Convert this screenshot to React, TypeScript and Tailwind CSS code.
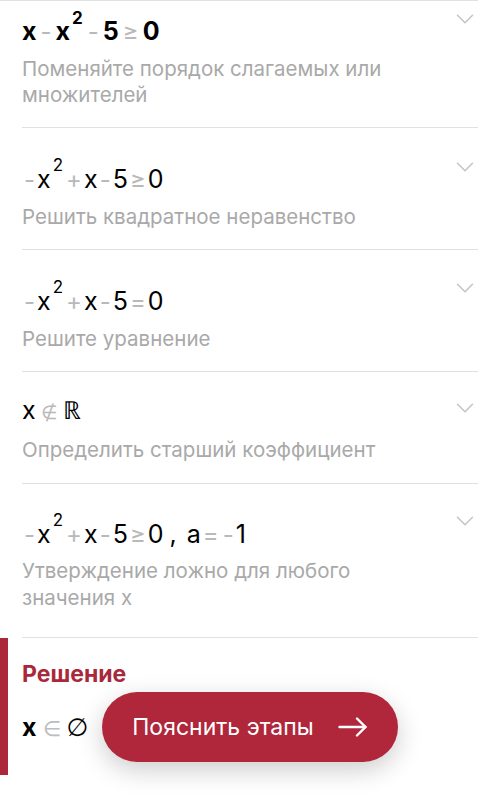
type Tok = { t: string; k?: 'op' | 'sup' | 'sep' | 'set' };

type Step = {
  math: Tok[];
  bold?: boolean;
  desc: string;
  pt: string;
  gap: string;
  pb: string;
  chev: string;
  lead: string;
};

const quad: Tok[] = [{ t: '-', k: 'op' }, { t: 'x' }, { t: '2', k: 'sup' }, { t: '+', k: 'op' }, { t: 'x' }, { t: '-', k: 'op' }, { t: '5' }];

const steps: Step[] = [
  {
    math: [{ t: 'x' }, { t: '-', k: 'op' }, { t: 'x' }, { t: '2', k: 'sup' }, { t: '-', k: 'op' }, { t: '5' }, { t: '≥', k: 'op' }, { t: '0' }],
    bold: true,
    desc: 'Поменяйте порядок слагаемых или множителей',
    pt: 'pt-[14px]',
    gap: 'mt-[9px]',
    pb: 'pb-[19px]',
    chev: '-mt-[11px]',
    lead: 'leading-[26px]',
  },
  {
    math: [...quad, { t: '≥', k: 'op' }, { t: '0' }],
    desc: 'Решить квадратное неравенство',
    pt: 'pt-[35px]',
    gap: 'mt-[9px]',
    pb: 'pb-[19px]',
    chev: '-mt-[11px]',
    lead: 'leading-[26px]',
  },
  {
    math: [...quad, { t: '=', k: 'op' }, { t: '0' }],
    desc: 'Решите уравнение',
    pt: 'pt-[35px]',
    gap: 'mt-[9px]',
    pb: 'pb-[19px]',
    chev: '-mt-[12px]',
    lead: 'leading-[26px]',
  },
  {
    math: [{ t: 'x' }, { t: '∉', k: 'set' }, { t: 'ℝ' }],
    desc: 'Определить старший коэффициент',
    pt: 'pt-[22px]',
    gap: 'mt-[11px]',
    pb: 'pb-[20px]',
    chev: '-mt-[1px]',
    lead: 'leading-[26px]',
  },
  {
    math: [...quad, { t: '≥', k: 'op' }, { t: '0' }, { t: ',', k: 'sep' }, { t: 'a' }, { t: '=', k: 'op' }, { t: '-', k: 'op' }, { t: '1' }],
    desc: 'Утверждение ложно для любого значения x',
    pt: 'pt-[34px]',
    gap: 'mt-[7px]',
    pb: 'pb-[26px]',
    chev: '-mt-[12px]',
    lead: 'leading-[27px]',
  },
];

function Formula({ toks, bold }: { toks: Tok[]; bold?: boolean }) {
  return (
    <>
      {toks.map((tk, i) => {
        if (tk.k === 'op')
          return (
            <span key={i} className={`text-[#b9b9b9] text-[24px] font-normal ${bold ? 'mx-[4px]' : 'mx-[2px]'}`}>
              {tk.t}
            </span>
          );
        if (tk.k === 'set')
          return (
            <span key={i} className="text-[#b9b9b9] text-[19px] font-normal mx-[5px]">
              {tk.t}
            </span>
          );
        if (tk.k === 'sup')
          return (
            <span key={i} className={`text-[17px] relative ${bold ? '-top-[16px]' : '-top-[17px]'} ml-[2px] mr-[1px]`}>
              {tk.t}
            </span>
          );
        if (tk.k === 'sep')
          return (
            <span key={i} className="ml-[6px] mr-[10px]">
              {tk.t}
            </span>
          );
        return <span key={i}>{tk.t}</span>;
      })}
    </>
  );
}

export default function App() {
  return (
    <div
      className="relative w-[500px] h-[804px] overflow-hidden bg-white"
      style={{ fontFamily: 'Inter, "Liberation Sans", sans-serif' }}
    >
      <div className="mr-[22px] border-t border-[#e1e1e1]" />
      {steps.map((s, i) => (
        <div key={i} className={`mx-[22px] border-b border-[#e1e1e1] flex items-start justify-between ${s.pt} ${s.pb}`}>
          <div className="flex flex-col">
            <div className={`h-[32px] leading-[32px] text-[25px] whitespace-nowrap text-black ${s.bold ? 'font-bold' : ''}`}>
              <Formula toks={s.math} bold={s.bold} />
            </div>
            <p className={`${s.gap} text-[20.5px] ${s.lead} text-[#a9a9a9] max-w-[370px]`}>{s.desc}</p>
          </div>
          <svg width="30" height="30" viewBox="0 0 24 24" className={`shrink-0 -mr-[2px] ${s.chev}`}>
            <path d="m6 9 6 6 6-6" fill="none" stroke="#c6c6c6" strokeWidth="1.3" strokeLinecap="round" strokeLinejoin="round" />
          </svg>
        </div>
      ))}

      <div className="flex">
        <div className="w-[8px] h-[137px] bg-[#ab283b]" />
        <div className="pl-[14px] pt-[20px]">
          <div className="text-[23px] leading-[32px] font-bold text-[#a8293b]">Решение</div>
          <div className="mt-[21px] text-[25px] leading-[32px] text-black whitespace-nowrap">
            <span className="font-bold">x</span>
            <span className="text-[#bdbdbd] text-[21px] mx-[6px]">∈</span>
            <span className="text-[25px]" style={{ fontFamily: '"DejaVu Sans", sans-serif' }}>∅</span>
          </div>
        </div>
      </div>

      <button className="absolute left-[102px] top-[692px] w-[296px] h-[70px] rounded-full bg-[#b0263a] text-white flex items-center justify-center gap-[24px] shadow-[0_8px_26px_rgba(0,0,0,0.2)]">
        <span className="text-[23px] leading-none">Пояснить этапы</span>
        <svg width="30" height="20" viewBox="0 0 30 20" fill="none" stroke="white" strokeWidth="2.4" strokeLinecap="round" strokeLinejoin="round">
          <path d="M1.5 10h26" />
          <path d="M19 1.5l8.5 8.5-8.5 8.5" />
        </svg>
      </button>
    </div>
  );
}
